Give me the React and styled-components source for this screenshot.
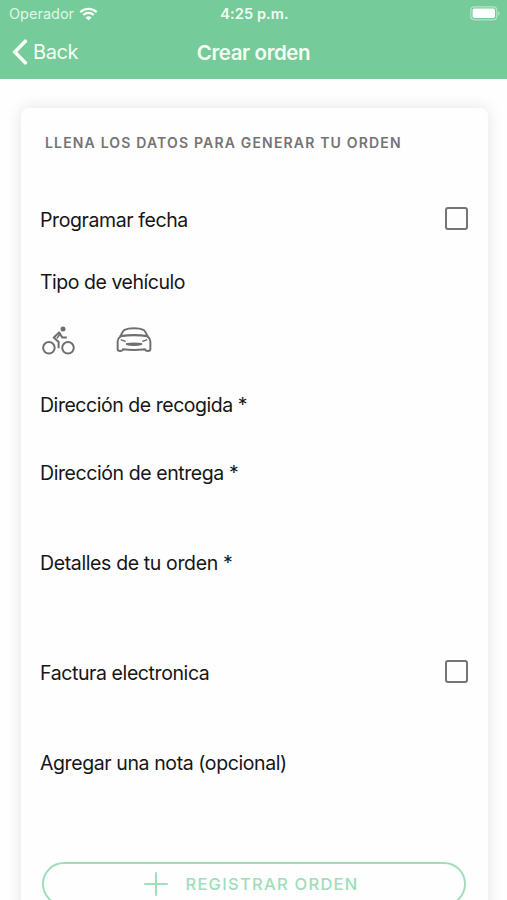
import React, { useState } from "react";
import styled, { createGlobalStyle } from "styled-components";

const GlobalStyle = createGlobalStyle`
  * {
    box-sizing: border-box;
  }
  body {
    margin: 0;
    background: #fefefe;
    font-family: Inter, "Liberation Sans", sans-serif;
    overflow: hidden;
  }
`;

const StyledScreen = styled.div`
  height: 100vh;
  overflow: hidden;
`;

const StyledHeader = styled.header`
  height: 79px;
  background: #75cb99;
  color: #f4fff4;
`;

const StyledStatusBar = styled.div`
  display: grid;
  grid-template-columns: 1fr auto 1fr;
  align-items: center;
  height: 27px;
  padding: 0 7px 0 9px;
`;

const StyledCarrier = styled.div`
  display: flex;
  align-items: center;
  gap: 5px;
  font-size: 14.5px;
  letter-spacing: 0;
  color: #dff8e5;
`;

const StyledTime = styled.div`
  font-size: 14.5px;
  font-weight: 600;
  letter-spacing: 0.1px;
`;

const StyledBattery = styled.div`
  display: flex;
  justify-content: flex-end;
`;

const StyledNav = styled.nav`
  display: grid;
  grid-template-columns: 1fr auto 1fr;
  align-items: center;
  height: 50px;
  padding: 0 12px;
`;

const StyledBack = styled.button`
  display: flex;
  align-items: center;
  gap: 5px;
  padding: 0;
  border: none;
  background: none;
  color: inherit;
  font-family: inherit;
  font-size: 20px;
  letter-spacing: -0.4px;
  cursor: pointer;
`;

const StyledTitle = styled.h1`
  margin: 0;
  font-size: 20.5px;
  font-weight: 600;
  letter-spacing: -0.4px;
`;

const StyledCard = styled.main`
  height: 860px;
  margin: 29px 19px 0 21px;
  padding: 24px 20px 0 19px;
  background: #fefefe;
  border-radius: 8px;
  box-shadow: 0 0 16px rgba(0, 0, 0, 0.11);
`;

const StyledSubtitle = styled.h2`
  height: 22px;
  margin: 0 0 51px 5px;
  font-size: 14px;
  line-height: 22px;
  font-weight: 600;
  letter-spacing: 1.17px;
  color: #747474;
`;

const StyledRow = styled.div`
  display: flex;
  justify-content: space-between;
  align-items: center;
  height: 30px;
  margin-bottom: ${(props) => props.$gap}px;
`;

const StyledLabel = styled.span`
  font-size: 19.5px;
  letter-spacing: ${(props) => props.$tracking || -0.4}px;
  color: #161616;
  white-space: nowrap;
`;

const StyledCheckbox = styled.button`
  width: 23px;
  height: 23px;
  margin-bottom: 3px;
  padding: 0;
  border: 2px solid #757575;
  border-radius: 3px;
  background: ${(props) => (props.$checked ? "#75cb99" : "transparent")};
  cursor: pointer;
`;

const StyledVehicles = styled.div`
  display: flex;
  align-items: center;
  gap: 41px;
  height: 30px;
  margin: 0 0 35px 2px;
`;

const StyledVehicle = styled.button`
  display: flex;
  padding: 0;
  border: none;
  background: none;
  color: #6f6f6f;
  cursor: pointer;
`;

const StyledSubmit = styled.button`
  display: flex;
  align-items: center;
  justify-content: center;
  gap: 17px;
  width: 424px;
  height: 44px;
  margin-left: 2px;
  padding: 0 5px 0 0;
  border: 2px solid #a0ddba;
  border-radius: 22px;
  background: transparent;
  color: #a0ddba;
  font-family: inherit;
  font-size: 16.5px;
  font-weight: 500;
  letter-spacing: 1.27px;
  cursor: pointer;
`;

const WifiIcon = () => (
  <svg width="19" height="14" viewBox="0 0 19 14" fill="none">
    <path
      d="M1.3 5.1c4.6-4.3 11.8-4.3 16.4 0M4.2 8c3-2.8 7.6-2.8 10.6 0"
      stroke="#f6fff6"
      strokeWidth="2.3"
    />
    <path d="M9.5 13.6 6.4 10.4c1.8-1.5 4.4-1.5 6.2 0Z" fill="#f6fff6" />
  </svg>
);

const BatteryIcon = () => (
  <svg width="30" height="15" viewBox="0 0 30 15">
    <rect
      x="0.8"
      y="0.8"
      width="26"
      height="13"
      rx="3.5"
      fill="none"
      stroke="#b5e6c6"
      strokeWidth="1.2"
    />
    <rect x="2.6" y="2.6" width="22.4" height="9.4" rx="1.8" fill="#fff" />
    <path d="M28.2 5c1.8.8 1.8 4 0 4.8Z" fill="#b5e6c6" />
  </svg>
);

const BackIcon = () => (
  <svg width="16" height="26" viewBox="0 0 16 26" fill="none">
    <path
      d="M13.3 2.2 2.8 13l10.5 10.8"
      stroke="#f8fff8"
      strokeWidth="3.6"
      strokeLinecap="round"
      strokeLinejoin="miter"
    />
  </svg>
);

const BikeIcon = () => (
  <svg
    width="33"
    height="29"
    viewBox="0 0 33 29"
    fill="none"
    stroke="currentColor"
    strokeWidth="2"
  >
    <circle cx="6.9" cy="21.8" r="5.8" />
    <circle cx="26" cy="21.8" r="5.8" />
    <circle cx="21" cy="2.9" r="2.5" fill="currentColor" stroke="none" />
    <path d="M24.8 11.4h-4.5L17 6.5l-5.2 5.1 4.8 4.4v6.2" />
    <path d="M18.5 7 15 12.4" strokeWidth="1.6" />
  </svg>
);

const CarIcon = () => (
  <svg
    width="36"
    height="26"
    viewBox="0 0 35 25"
    fill="none"
    stroke="currentColor"
    strokeWidth="1.9"
    strokeLinecap="round"
    strokeLinejoin="round"
  >
    <path d="M4.2 9.2C5.5 6.2 6.7 3.3 8.3 2.6 12.8.7 22.2.7 26.7 2.6c1.6.7 2.8 3.6 4.1 6.6 1.8 1.3 2.6 2.7 2.6 4.7v7.6c0 2.2-4.7 2.2-5.2 0-6.7.8-14.7.8-21.4 0-.5 2.2-5.2 2.2-5.2 0v-7.6c0-2 .8-3.4 2.6-4.7Z" />
    <path d="M4.5 8.8c7-1 19-1 26 0" strokeWidth="2.2" />
    <path d="m5.2 12.4 3.6 1.3M29.8 12.4l-3.6 1.3" strokeWidth="1.5" />
    <path
      d="M10.5 16.4c4-.6 10-.6 14 0-2.8 1.3-11.2 1.3-14 0Z"
      fill="currentColor"
    />
  </svg>
);

const PlusIcon = () => (
  <svg width="24" height="24" viewBox="0 0 24 24">
    <path
      d="M12 1v22M1 12h22"
      stroke="currentColor"
      strokeWidth="2"
      strokeLinecap="round"
    />
  </svg>
);

const App = () => {
  const [schedule, setSchedule] = useState(false);
  const [invoice, setInvoice] = useState(false);

  return (
    <StyledScreen>
      <GlobalStyle />
      <StyledHeader>
        <StyledStatusBar>
          <StyledCarrier>
            <span>Operador</span>
            <WifiIcon />
          </StyledCarrier>
          <StyledTime>4:25 p.m.</StyledTime>
          <StyledBattery>
            <BatteryIcon />
          </StyledBattery>
        </StyledStatusBar>
        <StyledNav>
          <StyledBack>
            <BackIcon />
            <span>Back</span>
          </StyledBack>
          <StyledTitle>Crear orden</StyledTitle>
        </StyledNav>
      </StyledHeader>
      <StyledCard>
        <StyledSubtitle>LLENA LOS DATOS PARA GENERAR TU ORDEN</StyledSubtitle>
        <StyledRow $gap={32}>
          <StyledLabel>Programar fecha</StyledLabel>
          <StyledCheckbox
            aria-label="Programar fecha"
            $checked={schedule}
            onClick={() => setSchedule(!schedule)}
          />
        </StyledRow>
        <StyledRow $gap={28}>
          <StyledLabel $tracking={-0.47}>Tipo de vehículo</StyledLabel>
        </StyledRow>
        <StyledVehicles>
          <StyledVehicle>
            <BikeIcon />
          </StyledVehicle>
          <StyledVehicle>
            <CarIcon />
          </StyledVehicle>
        </StyledVehicles>
        <StyledRow $gap={38}>
          <StyledLabel $tracking={-0.46}>Dirección de recogida *</StyledLabel>
        </StyledRow>
        <StyledRow $gap={60}>
          <StyledLabel $tracking={-0.42}>Dirección de entrega *</StyledLabel>
        </StyledRow>
        <StyledRow $gap={80}>
          <StyledLabel $tracking={-0.37}>Detalles de tu orden *</StyledLabel>
        </StyledRow>
        <StyledRow $gap={60}>
          <StyledLabel>Factura electronica</StyledLabel>
          <StyledCheckbox
            aria-label="Factura electronica"
            $checked={invoice}
            onClick={() => setInvoice(!invoice)}
          />
        </StyledRow>
        <StyledRow $gap={84}>
          <StyledLabel>Agregar una nota (opcional)</StyledLabel>
        </StyledRow>
        <StyledSubmit>
          <PlusIcon />
          <span>REGISTRAR ORDEN</span>
        </StyledSubmit>
      </StyledCard>
    </StyledScreen>
  );
};

export default App;
